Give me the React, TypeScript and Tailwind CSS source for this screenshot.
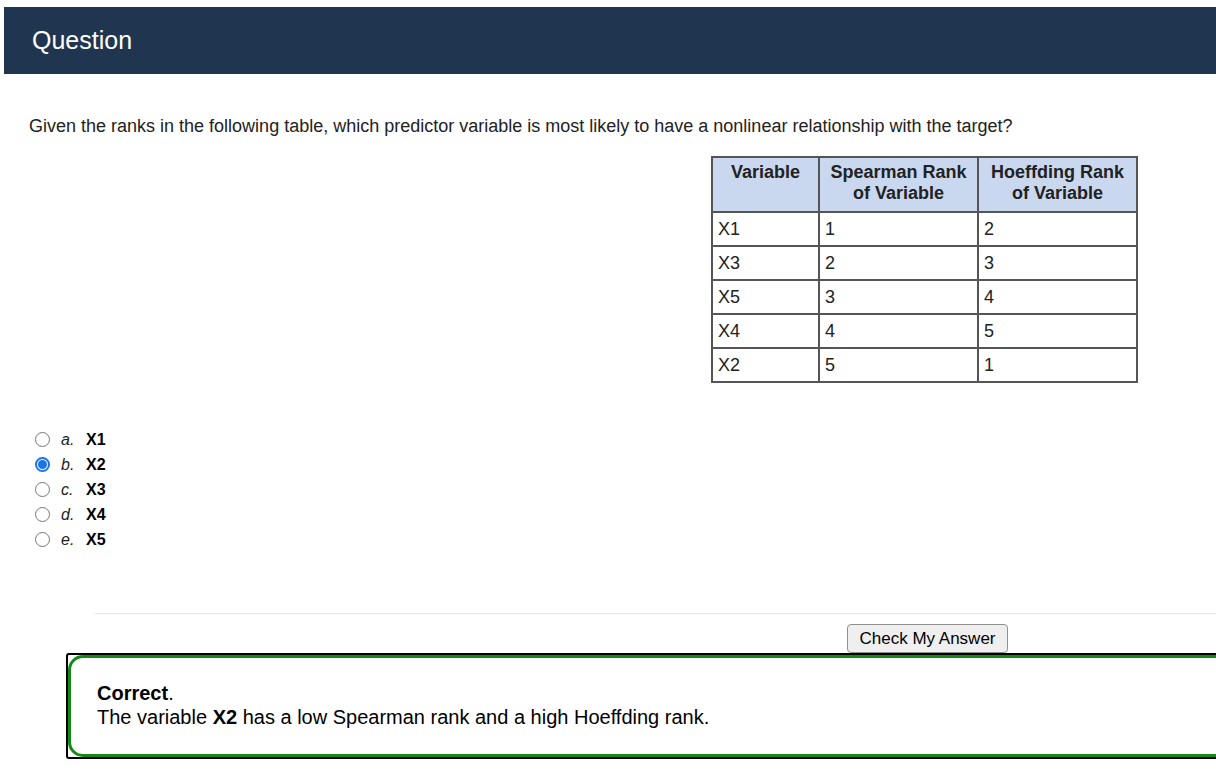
import React from "react";

const rows = [
  ["X1", "1", "2"],
  ["X3", "2", "3"],
  ["X5", "3", "4"],
  ["X4", "4", "5"],
  ["X2", "5", "1"],
];

const choices = [
  { letter: "a.", label: "X1" },
  { letter: "b.", label: "X2", checked: true },
  { letter: "c.", label: "X3" },
  { letter: "d.", label: "X4" },
  { letter: "e.", label: "X5" },
];

function Radio({ checked }: { checked?: boolean }) {
  if (checked) {
    return (
      <span className="flex h-[15px] w-[15px] items-center justify-center rounded-full border-2 border-[#1a73e8] bg-white">
        <span className="h-[9px] w-[9px] rounded-full bg-[#1a73e8]" />
      </span>
    );
  }
  return <span className="h-[15px] w-[15px] rounded-full border border-[#767676] bg-white" />;
}

export default function App() {
  return (
    <div className="w-[1216px] overflow-hidden bg-white pt-[7px] pb-[24px] font-['Liberation_Sans',Arial,sans-serif] text-[#222]">
      <div className="ml-[4px] flex h-[67px] items-center bg-[#203650] pl-[28px]">
        <h1 className="text-[25px] text-white">Question</h1>
      </div>

      <p className="mt-[41px] pl-[29px] text-[18px] leading-[22px]">
        Given the ranks in the following table, which predictor variable is most likely to have a nonlinear relationship with the target?
      </p>

      <div className="mt-[19px] flex justify-end pr-[78px]">
        <table className="border-collapse text-[18px] leading-[21px]">
          <thead>
            <tr className="bg-[#c9d8ef]">
              <th className="h-[55px] w-[107px] border-2 border-[#555] px-2 align-top pt-[4px] font-bold">Variable</th>
              <th className="w-[159px] border-2 border-[#555] px-2 align-top pt-[4px] font-bold">
                Spearman Rank
                <br />
                of Variable
              </th>
              <th className="w-[159px] border-2 border-[#555] px-2 align-top pt-[4px] font-bold">
                Hoeffding Rank
                <br />
                of Variable
              </th>
            </tr>
          </thead>
          <tbody>
            {rows.map((r) => (
              <tr key={r[0]} className="h-[34px]">
                {r.map((c, i) => (
                  <td key={i} className="border-2 border-[#555] px-[5px]">
                    {c}
                  </td>
                ))}
              </tr>
            ))}
          </tbody>
        </table>
      </div>

      <ul className="mt-[44px] pl-[35px] text-[16px]">
        {choices.map((c) => (
          <li key={c.label} className="flex h-[25px] items-center">
            <Radio checked={c.checked} />
            <span className="ml-[11px] w-[25px] italic">{c.letter}</span>
            <span className="font-bold text-black">{c.label}</span>
          </li>
        ))}
      </ul>

      <div className="mt-[61px] ml-[95px] border-t border-[#e5e5e5]" />

      <div className="ml-[847px] mt-[10px] flex">
        <button className="h-[29px] w-[161px] rounded-[4px] border border-[#8f8f8f] bg-[#efefef] text-[17px] text-black">
          Check My Answer
        </button>
      </div>

      <div className="ml-[66px] w-[1180px] rounded-[3px] border-2 border-black">
        <div className="h-[102px] rounded-[15px] border-[3px] border-[#138a13] pl-[26px] pt-[23px] text-[20px] leading-[24px] text-black">
          <p>
            <span className="font-bold">Correct</span>.
          </p>
          <p>
            The variable <span className="font-bold">X2</span> has a low Spearman rank and a high Hoeffding rank.
          </p>
        </div>
      </div>
    </div>
  );
}
